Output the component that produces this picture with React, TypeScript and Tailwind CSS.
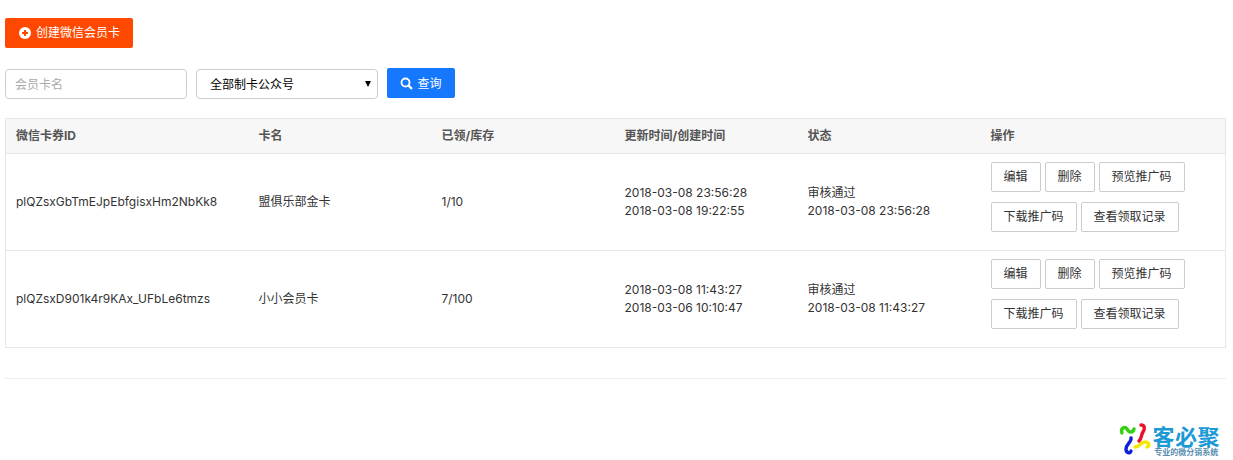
const rows = [
  {
    id: "plQZsxGbTmEJpEbfgisxHm2NbKk8",
    name: "盟俱乐部金卡",
    stock: "1/10",
    updated: "2018-03-08 23:56:28",
    created: "2018-03-08 19:22:55",
    audit: "2018-03-08 23:56:28",
  },
  {
    id: "plQZsxD901k4r9KAx_UFbLe6tmzs",
    name: "小小会员卡",
    stock: "7/100",
    updated: "2018-03-08 11:43:27",
    created: "2018-03-06 10:10:47",
    audit: "2018-03-08 11:43:27",
  },
];

const actions = ["编辑", "删除", "预览推广码", "下载推广码", "查看领取记录"];

function Logo() {
  return (
    <div className="flex items-start">
      {/* pinwheel mark */}
      <svg width="36" height="38" viewBox="0 0 36 38" className="shrink-0" fill="none" strokeWidth="3.4" strokeLinecap="round">
        <path d="M6 13C4 8 9 6 11 9c2 4 6 4 7 0" stroke="#35d010" />
        <path d="M25 5c4 0 4 4 2 7-2 3-1 6-4 9" stroke="#e8102a" />
        <path d="M19 27c5 0 6-5 10-5 4 0 5 4 2 5" stroke="#f4e800" />
        <path d="M15 18c1 4-5 6-5 11 0 4 4 5 5 2" stroke="#1020d8" />
      </svg>
      <div className="flex flex-col items-center mt-[3px]">
        <div className="h-[25px] text-[22px] leading-[25px] font-bold text-[#1b9ad6] font-['Noto_Sans_CJK_SC',sans-serif] tracking-[0.5px] whitespace-nowrap">
          客必聚
        </div>
        <div className="text-[8px] leading-[9px] font-bold text-[#5a8fb0] whitespace-nowrap">
          专业的微分销系统
        </div>
      </div>
    </div>
  );
}

export default function App() {
  return (
    <div className="h-[460px] bg-white px-[5px] pt-[18px] overflow-hidden text-[12px] text-[#333] font-['Inter','Noto_Sans_CJK_SC',sans-serif]">
      <button className="flex items-center h-[30px] w-[128px] pl-[14px] rounded-[2px] bg-[#ff4800] text-white">
        <svg width="12" height="12" viewBox="0 0 12 12" className="mr-[5px]">
          <circle cx="6" cy="6" r="6" fill="#fff" />
          <path d="M3 6h6M6 3v6" stroke="#ff4800" strokeWidth="2" />
        </svg>
        创建微信会员卡
      </button>

      <div className="flex items-start mt-[20px]">
        <input
          placeholder="会员卡名"
          className="w-[182px] h-[30px] mt-[1px] px-[9px] pt-[1px] border border-[#ccc] rounded-[4px] outline-none placeholder:text-[#aaa]"
        />
        <div className="relative ml-[9px] mt-[1px]">
          <select className="appearance-none w-[182px] h-[30px] pl-[13px] pt-[2px] border border-[#ccc] rounded-[4px] bg-white text-[#000] outline-none">
            <option>全部制卡公众号</option>
          </select>
          <span className="absolute right-[7px] top-[12px] w-0 h-0 border-x-[3px] border-x-transparent border-t-[6px] border-t-black" />
        </div>
        <button className="flex items-center justify-center gap-[4px] ml-[9px] w-[68px] h-[30px] rounded-[2px] bg-[#1677ff] text-white">
          <svg width="13" height="13" viewBox="0 0 13 13" fill="none" stroke="#fff">
            <circle cx="5.5" cy="5.5" r="4" strokeWidth="1.8" />
            <path d="M8.5 8.5l3.5 3.5" strokeWidth="2.4" />
          </svg>
          <span className="mt-[1px]">查询</span>
        </button>
      </div>

      <table className="mt-[19px] w-[1221px] table-fixed border-collapse border border-[#e7e7e7]">
        <colgroup>
          <col className="w-[243px]" />
          <col className="w-[183px]" />
          <col className="w-[183px]" />
          <col className="w-[183px]" />
          <col className="w-[183px]" />
          <col />
        </colgroup>
        <thead>
          <tr className="h-[35px] bg-[#f7f7f7] border-b border-[#e7e7e7] text-left text-[#555]">
            <th className="pl-[10px] font-bold">微信卡券ID</th>
            <th className="pl-[10px] font-bold">卡名</th>
            <th className="pl-[10px] font-bold">已领/库存</th>
            <th className="pl-[10px] font-bold">更新时间/创建时间</th>
            <th className="pl-[10px] font-bold">状态</th>
            <th className="pl-[10px] font-bold">操作</th>
          </tr>
        </thead>
        <tbody>
          {rows.map((r) => (
            <tr key={r.id} className="h-[97px] border-b border-[#e7e7e7] leading-[18px]">
              <td className="pl-[10px]">{r.id}</td>
              <td className="pl-[10px]">{r.name}</td>
              <td className="pl-[10px]">{r.stock}</td>
              <td className="pl-[10px]">
                <div>{r.updated}</div>
                <div>{r.created}</div>
              </td>
              <td className="pl-[10px]">
                <div>审核通过</div>
                <div>{r.audit}</div>
              </td>
              <td className="pl-[10px] pt-[7px] pb-[18px]">
                <div className="flex flex-wrap gap-x-[4px] gap-y-[10px]">
                  {actions.map((a) => (
                    <button key={a} className="h-[30px] px-[12px] border border-[#ccc] rounded-[2px] bg-white whitespace-nowrap">
                      {a}
                    </button>
                  ))}
                </div>
              </td>
            </tr>
          ))}
        </tbody>
      </table>

      <hr className="mt-[30px] w-[1221px] border-t border-[#eee]" />

      <div className="flex justify-end w-[1215px] mt-[41px]">
        <Logo />
      </div>
    </div>
  );
}
